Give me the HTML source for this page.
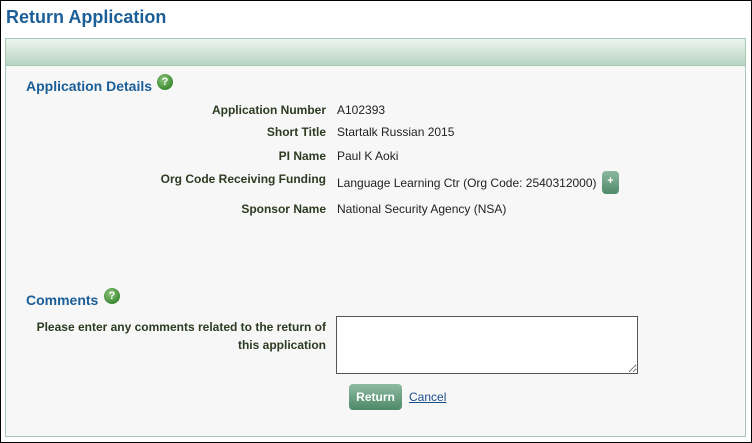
<!DOCTYPE html>
<html><head><meta charset="utf-8"><style>
*{margin:0;padding:0;box-sizing:border-box}
html,body{width:752px;height:443px;overflow:hidden;background:#fff}
body{font-family:"Liberation Sans",Arial,sans-serif;font-size:12px;position:relative}
.frame{position:absolute;left:0;top:0;width:752px;height:443px;border:1px solid #000}
h1{position:absolute;left:6px;top:7px;font-size:18px;font-weight:bold;color:#1b5e98}
.panel{position:absolute;left:5px;top:38px;width:741px;height:399px;border:1px solid #a8c8b6;background:#f7f7f7}
.band{height:27px;background:linear-gradient(#eef5f0,#b5d4c2);border-bottom:1px solid #a8c8b6}
.sec{position:absolute;font-size:14px;font-weight:bold;color:#1b5e98}
.q{position:absolute;width:16px;height:16px;border-radius:50%;background:radial-gradient(circle at 40% 35%,#8cc47a,#3c8a34 70%);color:#fff;font-size:11px;font-weight:bold;text-align:center;line-height:16px}
.lab{position:absolute;right:426px;font-weight:bold;color:#2d3b22;text-align:right;white-space:nowrap}
.val{position:absolute;left:337px;color:#222;white-space:nowrap}
.plus{position:absolute;left:602px;top:171px;width:17px;height:23px;border-radius:4px;background:linear-gradient(#8bb89f,#4f8a6a);color:#fff;font-weight:bold;text-align:center;line-height:21px;font-size:11px}
textarea{position:absolute;left:336px;top:316px;width:302px;height:58px;border:1px solid #555;background:#fff;resize:both}
.btn{position:absolute;left:349px;top:384px;width:53px;height:26px;border-radius:4px;background:linear-gradient(#8dbba1,#4d8867);color:#fff;font-weight:bold;text-align:center;line-height:26px;font-size:12px}
a{position:absolute;left:409px;top:390px;color:#1b4f8c;text-decoration:underline}
</style></head><body>
<div class="frame"></div>
<h1>Return Application</h1>
<div class="panel"><div class="band"></div></div>
<div class="sec" style="left:26px;top:78px">Application Details</div>
<div class="q" style="left:157px;top:74px">?</div>
<div class="lab" style="top:103px">Application Number</div><div class="val" style="top:103px">A102393</div>
<div class="lab" style="top:125px">Short Title</div><div class="val" style="top:125px">Startalk Russian 2015</div>
<div class="lab" style="top:149px">PI Name</div><div class="val" style="top:149px">Paul K Aoki</div>
<div class="lab" style="top:172px">Org Code Receiving Funding</div><div class="val" style="top:176px">Language Learning Ctr (Org Code: 2540312000)</div>
<div class="plus">+</div>
<div class="lab" style="top:202px">Sponsor Name</div><div class="val" style="top:202px">National Security Agency (NSA)</div>
<div class="sec" style="left:26px;top:292px">Comments</div>
<div class="q" style="left:104px;top:288px">?</div>
<div class="lab" style="top:318px;line-height:18px">Please enter any comments related to the return of<br>this application</div>
<textarea></textarea>
<div class="btn">Return</div>
<a>Cancel</a>
</body></html>
